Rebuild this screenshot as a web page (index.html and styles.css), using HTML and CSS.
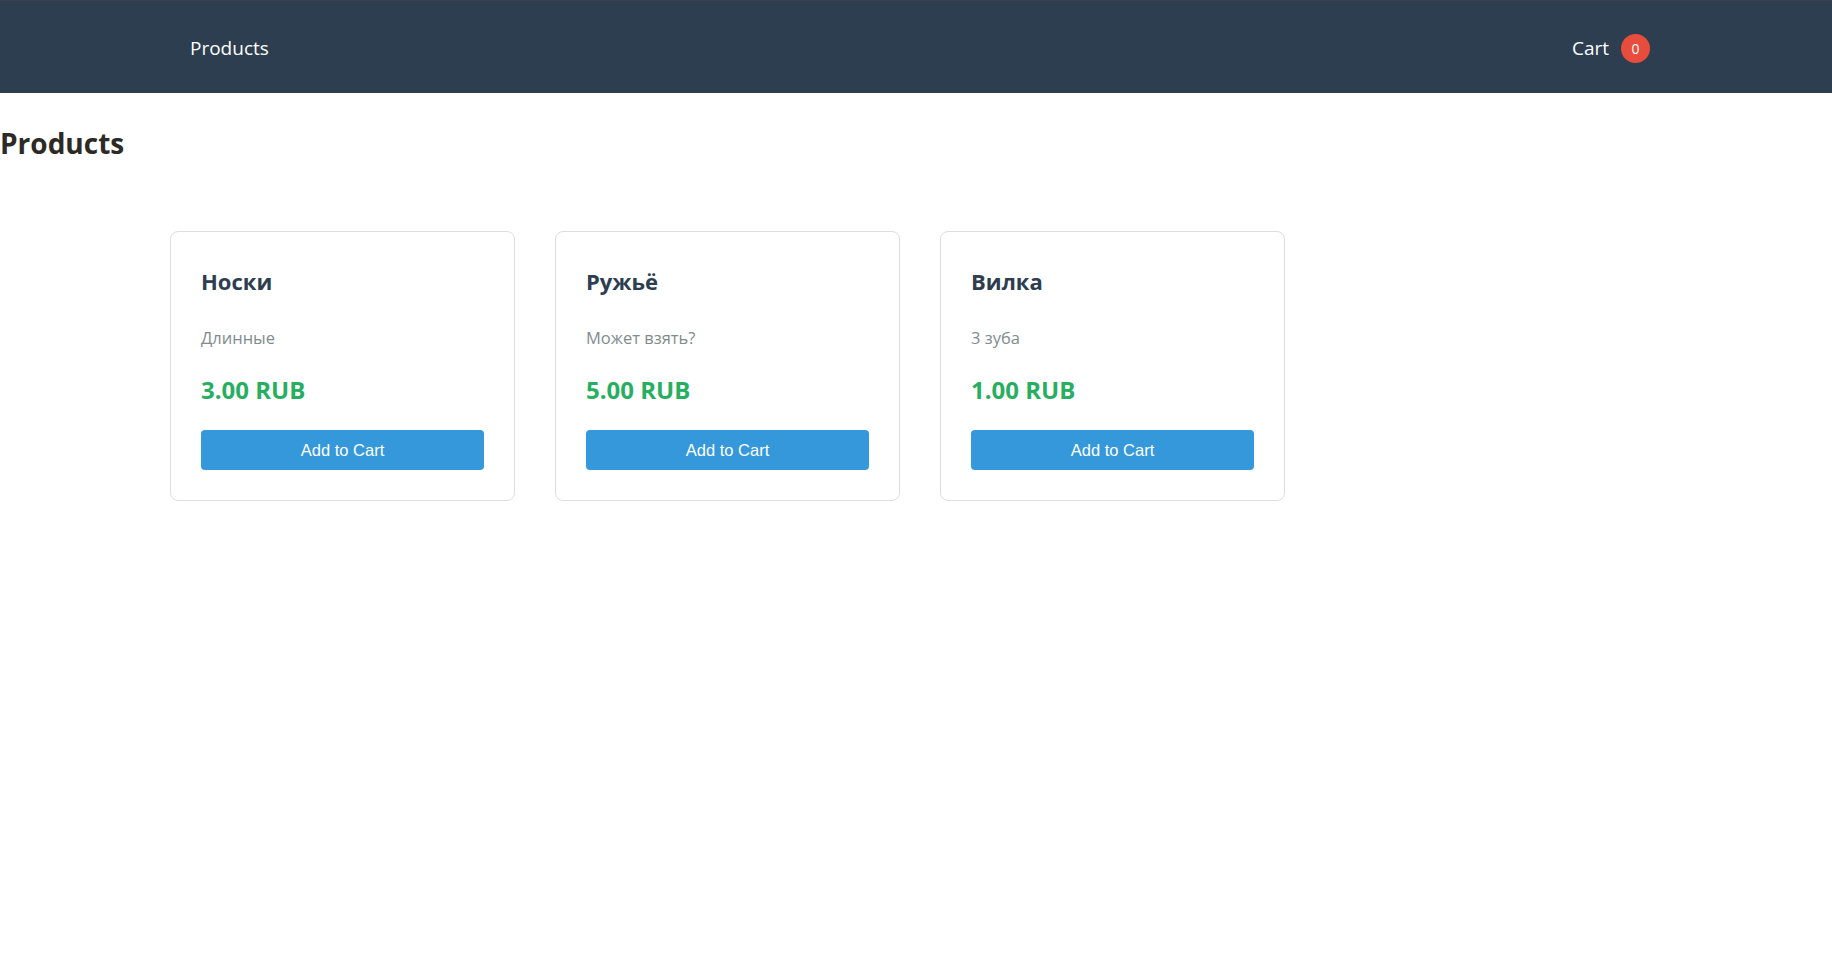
FILE: index.html
```html
<!DOCTYPE html>
<html lang="ru">
<head>
<meta charset="utf-8">
<title>Products</title>
<link rel="stylesheet" href="styles.css">
</head>
<body>
<header class="navbar">
  <a class="nav-link" href="#">Products</a>
  <a class="nav-cart" href="#">Cart <span class="cart-badge">0</span></a>
</header>
<h1 class="page-title">Products</h1>
<main class="product-grid">
  <div class="product-card">
    <h3 class="product-name">Носки</h3>
    <p class="product-desc">Длинные</p>
    <p class="product-price">3.00 RUB</p>
    <button class="add-btn">Add to Cart</button>
  </div>
  <div class="product-card">
    <h3 class="product-name">Ружьё</h3>
    <p class="product-desc">Может взять?</p>
    <p class="product-price">5.00 RUB</p>
    <button class="add-btn">Add to Cart</button>
  </div>
  <div class="product-card">
    <h3 class="product-name">Вилка</h3>
    <p class="product-desc">3 зуба</p>
    <p class="product-price">1.00 RUB</p>
    <button class="add-btn">Add to Cart</button>
  </div>
</main>
</body>
</html>
```
FILE: styles.css
```css
* { box-sizing: border-box; }
body {
  margin: 0;
  font-family: "Open Sans", "Noto Sans", sans-serif;
  color: #333;
  background: #fff;
}
.navbar {
  height: 93px;
  background: #2c3e50;
  border-top: 1px solid #39424c;
  display: flex;
  align-items: center;
  justify-content: space-between;
  padding: 2px 182px 0 190px;
}
.nav-link, .nav-cart {
  color: #fff;
  text-decoration: none;
  font-size: 19px;
}
.nav-cart {
  display: flex;
  align-items: center;
  gap: 12px;
}
.cart-badge {
  width: 29px;
  height: 29px;
  border-radius: 50%;
  background: #e74c3c;
  color: #fff;
  font-size: 14px;
  display: flex;
  align-items: center;
  justify-content: center;
}
.page-title {
  margin: 31px 0 0;
  font-size: 28px;
  font-weight: 700;
  color: #2d2a26;
  line-height: normal;
}
.product-grid {
  display: grid;
  grid-template-columns: repeat(3, 345px);
  gap: 40px;
  padding: 69px 170px 0;
}
.product-card {
  border: 1px solid #dedede;
  border-radius: 8px;
  padding: 30px;
  background: #fff;
}
.product-name {
  margin: 4px 0 0;
  font-size: 22px;
  font-weight: 700;
  color: #2c3e50;
  line-height: normal;
}
.product-desc {
  margin: 30px 0 0;
  font-size: 16.5px;
  color: #7f8c8d;
  line-height: normal;
}
.product-price {
  margin: 24px 0 0;
  font-size: 24px;
  font-weight: 700;
  color: #27ae60;
  line-height: normal;
}
.add-btn {
  display: block;
  width: 100%;
  height: 40px;
  margin-top: 24px;
  border: none;
  border-radius: 4px;
  background: #3498db;
  color: #fff;
  font-family: "Liberation Sans", Arial, sans-serif;
  font-size: 16.5px;
  cursor: pointer;
}
```
